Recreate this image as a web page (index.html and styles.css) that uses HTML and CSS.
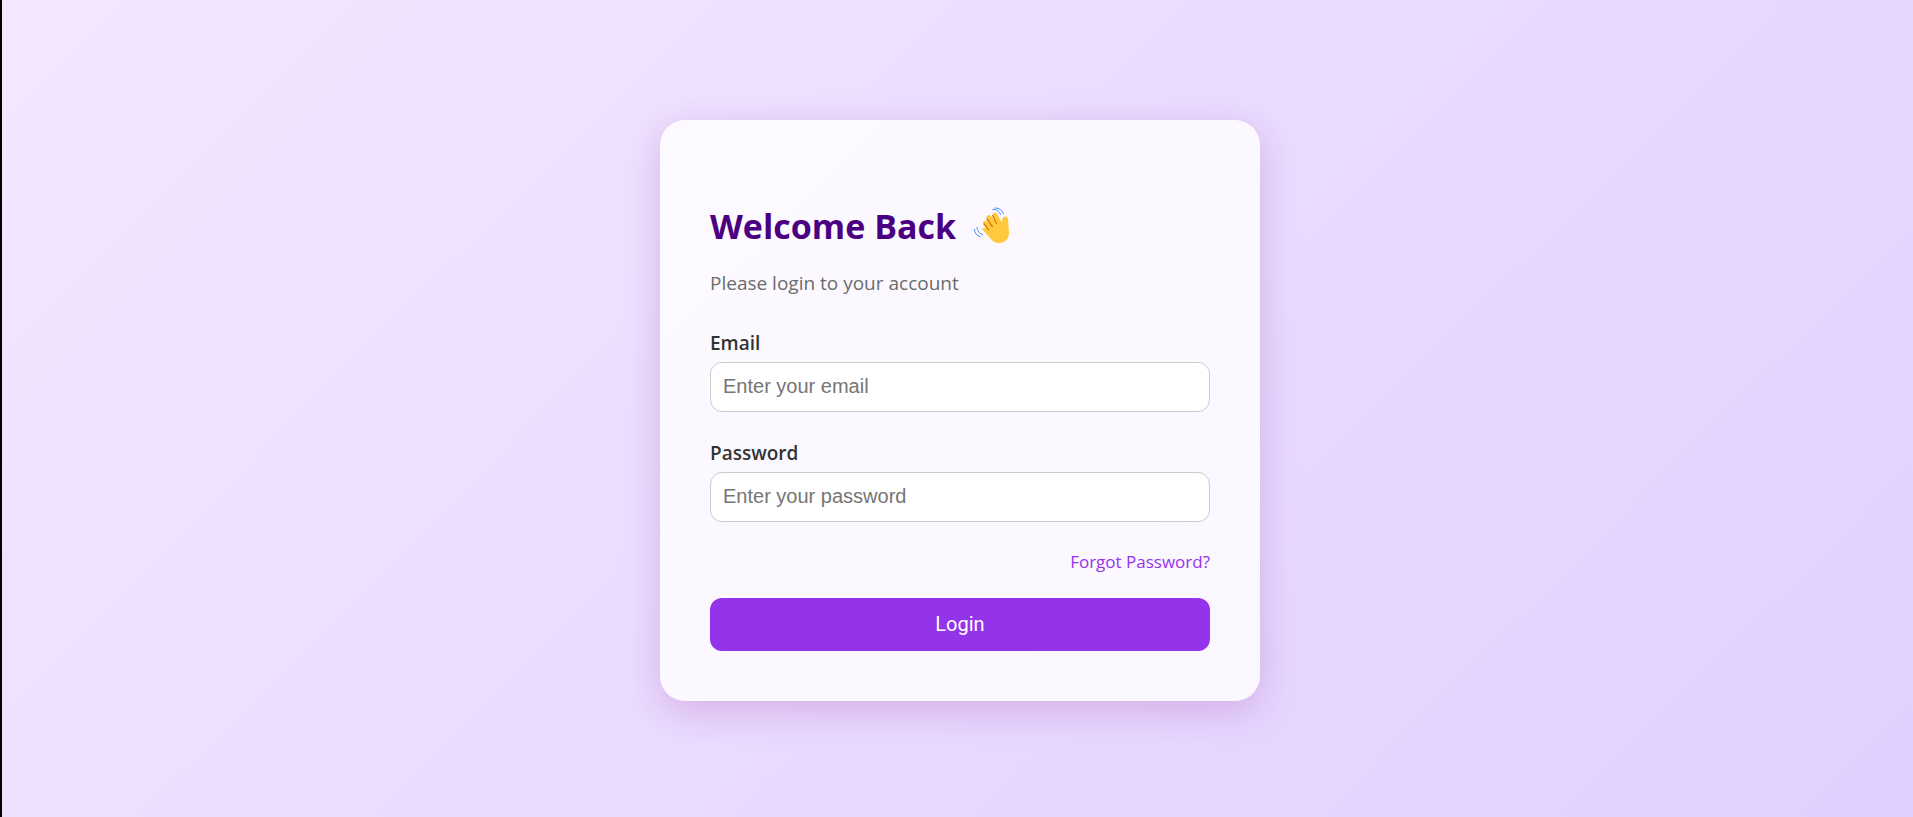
FILE: index.html
```html
<!DOCTYPE html>
<html lang="en">
<head>
<meta charset="utf-8">
<meta name="viewport" content="width=device-width, initial-scale=1">
<title>Login</title>
<link rel="stylesheet" href="styles.css">
</head>
<body>
<main class="page">
  <section class="card">
    <h1 class="title">Welcome Back
      <svg class="wave" viewBox="24 24 108 111" role="img" aria-label="Waving hand">
        <path class="hand" d="M57 97C49 91 53 83 61 87L66 89L55 75C51 67 60 61 67 68L75 76L65 59C62 49 72 44 78 52L89 66L83 50C81 41 92 38 97 46L110 70L113 58C115 50 127 51 129 59L132 102C132 120 119 132 101 132C91 132 86 128 77 119Z"/>
        <path class="crease" d="M71 92L57 75M82 83L66 60M94 73L83 50"/>
        <path class="motion" d="M83 31Q100 29 107 47M90 27Q110 26 115 44M36 85Q37 102 53 107M28 91Q29 109 46 113"/>
      </svg>
    </h1>
    <p class="subtitle">Please login to your account</p>
    <form class="form">
      <div class="field">
        <label class="label" for="email">Email</label>
        <input class="input" id="email" type="email" placeholder="Enter your email">
      </div>
      <div class="field">
        <label class="label" for="password">Password</label>
        <input class="input" id="password" type="password" placeholder="Enter your password">
      </div>
      <a class="forgot" href="#">Forgot Password?</a>
      <button class="submit" type="submit">Login</button>
    </form>
  </section>
</main>
</body>
</html>
```
FILE: styles.css
```css
* {
  box-sizing: border-box;
}

body {
  margin: 0;
  font-family: "Segoe UI", "Open Sans", sans-serif;
}

.page {
  display: flex;
  align-items: center;
  justify-content: center;
  min-height: 100vh;
  padding: 3px 0 0 5px;
  border-left: 2px solid #000;
  background: linear-gradient(135deg, #f4e7ff, #e1d0ff);
}

.card {
  width: 100%;
  max-width: 600px;
  padding: 81px 50px 50px;
  border-radius: 25px;
  background: rgba(255, 255, 255, 0.8);
  box-shadow: 0 10px 38px rgba(128, 0, 128, 0.2);
}

.title {
  display: flex;
  align-items: center;
  gap: 17px;
  margin: 0 0 17px;
  color: #4b0082;
  font-size: 34px;
  font-weight: 700;
  line-height: 50px;
}

.wave {
  width: 36px;
  height: 37px;
}

.hand {
  fill: #ffc83d;
}

.crease {
  fill: none;
  stroke: #d67d00;
  stroke-width: 4;
  stroke-linecap: round;
}

.motion {
  fill: none;
  stroke: #5092ff;
  stroke-width: 3;
  stroke-linecap: round;
}

.subtitle {
  margin: 0 0 30px;
  color: #6b6b6b;
  font-size: 19px;
  line-height: 30px;
}

.form {
  display: flex;
  flex-direction: column;
}

.field {
  display: flex;
  flex-direction: column;
  gap: 4px;
  margin-bottom: 26px;
}

.label {
  color: #333;
  font-size: 19px;
  font-weight: 600;
  line-height: 30px;
}

.input {
  width: 100%;
  height: 50px;
  padding: 0 12px;
  border: 1px solid #ccc;
  border-radius: 12px;
  background: #fff;
  color: #333;
  font-family: "Liberation Sans", Arial, sans-serif;
  font-size: 20px;
}

.input::placeholder {
  color: #757575;
}

.forgot {
  align-self: flex-end;
  margin: 0 0 22px;
  color: #9333ea;
  font-size: 17px;
  line-height: 28px;
  text-decoration: none;
}

.submit {
  height: 53px;
  border: 0;
  border-radius: 12px;
  background: #9333ea;
  color: #fff;
  font-family: Roboto, "Liberation Sans", sans-serif;
  font-size: 20px;
}
```
